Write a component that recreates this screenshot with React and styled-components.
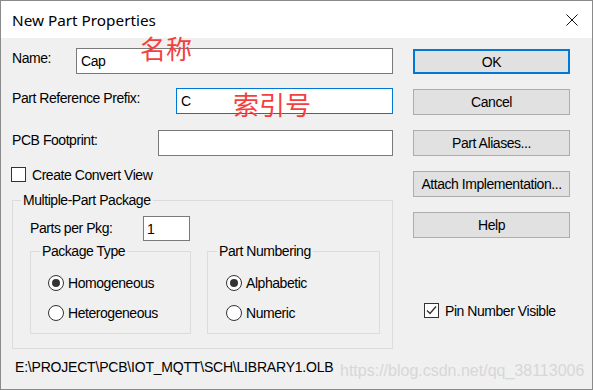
import React from "react";
import styled, { createGlobalStyle } from "styled-components";

const Global = createGlobalStyle`
  html, body { margin: 0; padding: 0; background: #fff; }
  body { font-family: "Liberation Sans", Arial, sans-serif; }
  * { box-sizing: border-box; }
`;

const Window = styled.div`
  position: relative;
  width: 593px;
  height: 390px;
  border: 1px solid #8a8a8a;
  background: #f0f0f0;
  display: flex;
  flex-direction: column;
  overflow: hidden;
  font-family: "Liberation Sans", Arial, sans-serif;
  font-size: 14px;
  letter-spacing: -0.45px;
  color: #000;
`;

const TitleBar = styled.div`
  height: 37px;
  flex-shrink: 0;
  background: #fff;
  display: flex;
  align-items: center;
  justify-content: space-between;
  padding-left: 11px;
`;

const Title = styled.div`
  font-family: "Noto Sans", "Liberation Sans", sans-serif;
  font-size: 15.3px;
  letter-spacing: 0;
  color: #000;
`;

const CloseBox = styled.div`
  width: 41px;
  height: 37px;
  display: flex;
  align-items: center;
  justify-content: center;
`;

const Body = styled.div`
  flex: 1;
  display: flex;
  padding: 10px 0 0 11px;
`;

const LeftCol = styled.div`
  width: 381px;
  display: flex;
  flex-direction: column;
`;

const RightCol = styled.div`
  width: 157px;
  margin-left: 20px;
  padding-top: 1px;
  display: flex;
  flex-direction: column;
`;

const FieldRow = styled.div`
  display: flex;
  height: ${(p) => p.$h || 26}px;
  margin-top: ${(p) => p.$mt || 0}px;
`;

const FieldLabel = styled.div`
  width: ${(p) => p.$w}px;
  flex-shrink: 0;
  padding-top: ${(p) => p.$pt ?? 2}px;
  line-height: 16px;
  white-space: nowrap;
`;

const TextBox = styled.div`
  flex: ${(p) => (p.$w ? `0 0 ${p.$w}px` : "1")};
  height: 100%;
  background: #fff;
  border: 1px solid ${(p) => (p.$focus ? "#0078d7" : "#7a7a7a")};
  padding: 0 ${(p) => p.$px ?? 4}px;
  display: flex;
  align-items: center;
  line-height: 16px;
`;

const CheckRow = styled.div`
  display: flex;
  align-items: center;
  gap: 6px;
  height: 15px;
  line-height: 16px;
  margin-top: ${(p) => p.$mt || 0}px;
  margin-left: ${(p) => p.$ml || 0}px;
  white-space: nowrap;
`;

const CheckBox = styled.span`
  width: 15px;
  height: 15px;
  flex-shrink: 0;
  border: 1px solid #333;
  background: #fff;
  display: flex;
  align-items: center;
  justify-content: center;
`;

const Group = styled.fieldset`
  margin: ${(p) => p.$mt || 0}px 0 0 0;
  padding: 0;
  width: ${(p) => p.$w}px;
  height: ${(p) => p.$h}px;
  min-width: 0;
  border: 1px solid #dcdcdc;
`;

const Legend = styled.legend`
  margin-left: ${(p) => p.$ml}px;
  padding: 0 2px;
  line-height: 16px;
  font-size: 14px;
  white-space: nowrap;
`;

const GroupInner = styled.div`
  display: flex;
  flex-direction: column;
  padding: ${(p) => p.$pt}px 0 0 ${(p) => p.$pl}px;
  gap: ${(p) => p.$gap || 0}px;
`;

const SubRow = styled.div`
  display: flex;
  gap: 16px;
  margin-top: 2px;
`;

const RadioRow = styled.div`
  display: flex;
  align-items: center;
  gap: 4px;
  height: 16px;
  line-height: 16px;
`;

const RadioCircle = styled.span`
  width: 16px;
  height: 16px;
  flex-shrink: 0;
  border-radius: 50%;
  border: 1px solid #333;
  background: #fff;
  display: flex;
  align-items: center;
  justify-content: center;
  &::after {
    content: "";
    display: ${(p) => (p.$on ? "block" : "none")};
    width: 8px;
    height: 8px;
    border-radius: 50%;
    background: #333;
  }
`;

const PathText = styled.div`
  margin: 10px 0 0 3px;
  line-height: 16px;
  letter-spacing: -0.2px;
  white-space: nowrap;
`;

const Button = styled.button`
  height: ${(p) => p.$h || 26}px;
  margin: ${(p) => p.$mt || 0}px 0 0 0;
  padding: 0;
  background: #e1e1e1;
  border: ${(p) => (p.$default ? "2px solid #0078d7" : "1px solid #adadad")};
  font: inherit;
  letter-spacing: inherit;
  color: #000;
  line-height: 16px;
  display: flex;
  align-items: center;
  justify-content: center;
`;

const Watermark = styled.div`
  position: absolute;
  left: 339px;
  top: 361px;
  font-size: 16px;
  line-height: 18px;
  letter-spacing: 0;
  color: #d7d7d7;
  white-space: nowrap;
`;

const Annotation = styled.div`
  position: absolute;
  left: ${(p) => p.$x}px;
  top: ${(p) => p.$y}px;
  font-family: "Noto Sans CJK SC", "Noto Sans CJK JP", sans-serif;
  font-size: 26px;
  line-height: 1;
  letter-spacing: 0;
  color: #f43f3f;
  white-space: nowrap;
`;

function Radio({ on, children }) {
  return (
    <RadioRow>
      <RadioCircle $on={on} />
      <span>{children}</span>
    </RadioRow>
  );
}

export default function App() {
  return (
    <>
      <Global />
      <Window>
        <TitleBar>
          <Title>New Part Properties</Title>
          <CloseBox>
            <svg width="12" height="12" viewBox="0 0 12 12">
              <path d="M0.5 0.5 L11.5 11.5 M11.5 0.5 L0.5 11.5" stroke="#111" strokeWidth="1" fill="none" />
            </svg>
          </CloseBox>
        </TitleBar>
        <Body>
          <LeftCol>
            <FieldRow>
              <FieldLabel $w={64}>Name:</FieldLabel>
              <TextBox>Cap</TextBox>
            </FieldRow>
            <FieldRow $mt={14}>
              <FieldLabel $w={164}>Part Reference Prefix:</FieldLabel>
              <TextBox $focus>C</TextBox>
            </FieldRow>
            <FieldRow $mt={16}>
              <FieldLabel $w={146}>PCB Footprint:</FieldLabel>
              <TextBox />
            </FieldRow>
            <CheckRow $mt={11} $ml={-1}>
              <CheckBox />
              <span>Create Convert View</span>
            </CheckRow>
            <Group $mt={10} $w={381} $h={157}>
              <Legend $ml={8}>Multiple-Part Package</Legend>
              <GroupInner $pt={8} $pl={17}>
                <FieldRow $h={25}>
                  <FieldLabel $w={113} $pt={4}>Parts per Pkg:</FieldLabel>
                  <TextBox $w={47} $px={3}>1</TextBox>
                </FieldRow>
                <SubRow>
                  <Group $w={161} $h={91}>
                    <Legend $ml={9}>Package Type</Legend>
                    <GroupInner $pt={16} $pl={17} $gap={14}>
                      <Radio on>Homogeneous</Radio>
                      <Radio>Heterogeneous</Radio>
                    </GroupInner>
                  </Group>
                  <Group $w={173} $h={91}>
                    <Legend $ml={9}>Part Numbering</Legend>
                    <GroupInner $pt={16} $pl={18} $gap={14}>
                      <Radio on>Alphabetic</Radio>
                      <Radio>Numeric</Radio>
                    </GroupInner>
                  </Group>
                </SubRow>
              </GroupInner>
            </Group>
            <PathText>E:\PROJECT\PCB\IOT_MQTT\SCH\LIBRARY1.OLB</PathText>
          </LeftCol>
          <RightCol>
            <Button $default $h={25}>OK</Button>
            <Button $mt={15}>Cancel</Button>
            <Button $mt={15}>Part Aliases...</Button>
            <Button $mt={15}>Attach Implementation...</Button>
            <Button $mt={15}>Help</Button>
            <CheckRow $mt={65} $ml={11}>
              <CheckBox>
                <svg width="13" height="13" viewBox="0 0 13 13">
                  <path d="M2 6.5 L5 9.5 L11 2.5" stroke="#333" strokeWidth="1.4" fill="none" />
                </svg>
              </CheckBox>
              <span>Pin Number Visible</span>
            </CheckRow>
          </RightCol>
        </Body>
        <Annotation $x={139} $y={34}>名称</Annotation>
        <Annotation $x={232} $y={90}>索引号</Annotation>
        <Watermark>https://blog.csdn.net/qq_38113006</Watermark>
      </Window>
    </>
  );
}
